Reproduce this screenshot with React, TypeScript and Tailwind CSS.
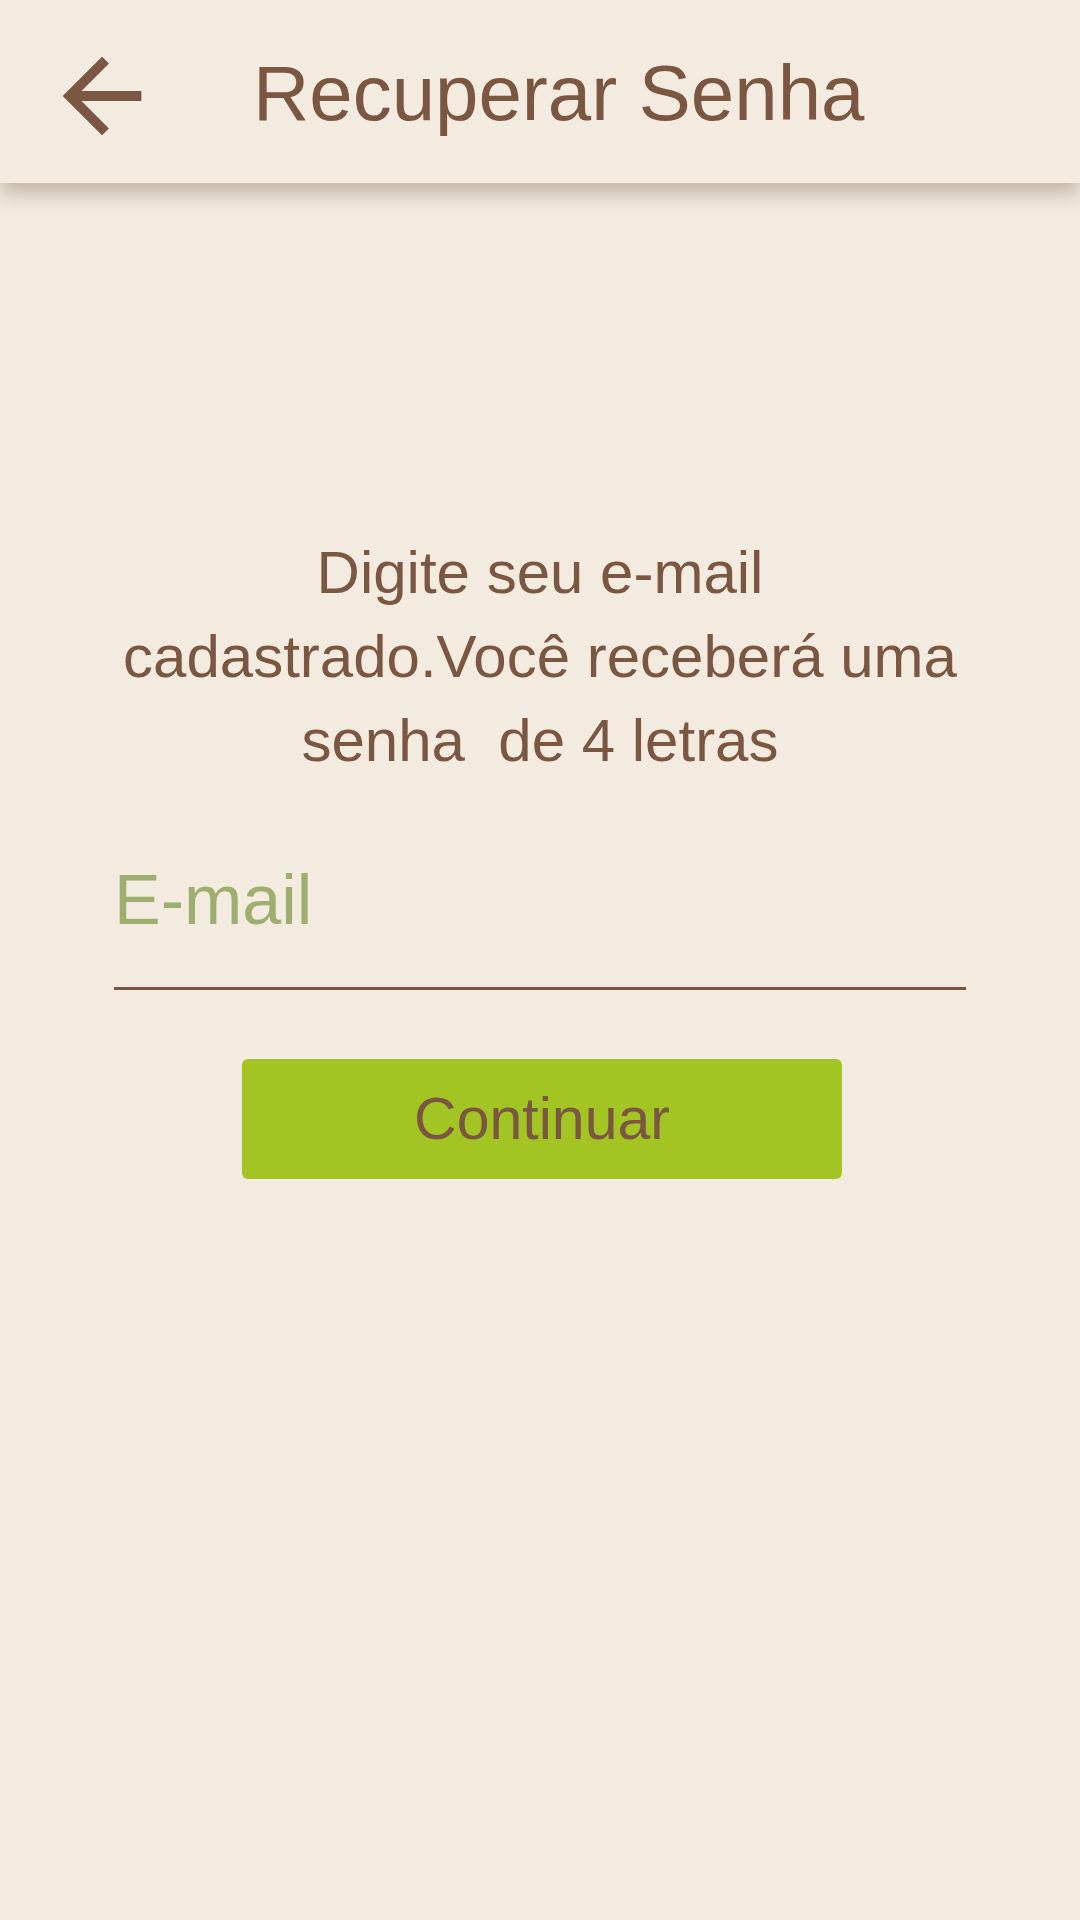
import React, { useState } from 'react';

export default function App() {
  const [email, setEmail] = useState('');

  return (
    <div className="min-h-[1920px] w-full bg-[#f3ebdf] text-[#7b5641]" style={{ fontFamily: '"Liberation Sans", Arial, sans-serif' }}>
      {/* Top bar */}
      <header className="relative z-10 flex h-[183px] items-start bg-[#f3ebdf] shadow-[0_10px_20px_rgba(70,50,30,0.3)]">
        <button className="ml-[43px] mt-[37px] shrink-0" aria-label="Voltar">
          <svg width="118" height="118" viewBox="0 0 24 24" fill="#7b5641">
            <path d="M20 11H7.83l5.59-5.59L12 4l-8 8 8 8 1.41-1.41L7.83 13H20v-2z" />
          </svg>
        </button>
        <h1 className="ml-[92px] mt-[54px] text-[78px] font-normal leading-none">Recuperar Senha</h1>
      </header>

      {/* Form */}
      <main className="mx-[114px] pt-[348px]">
        <p className="whitespace-pre-wrap text-center text-[60px] leading-[84px]">
          {'Digite seu e-mail cadastrado.Você receberá uma senha  de 4 letras'}
        </p>

        <input
          type="email"
          value={email}
          onChange={(e) => setEmail(e.target.value)}
          placeholder="E-mail"
          className="mt-[78px] block h-[129px] w-full border-b-[3px] border-[#7b5641] bg-transparent p-0 pb-[48px] text-[70px] text-[#7b5641] outline-none placeholder:text-[#9eae6e]"
        />

        <button className="mx-auto mt-[69px] block h-[120px] w-[600px] translate-x-[2px] rounded-[6px] bg-[#a2c523] text-[59px] leading-none text-[#7b5641]">
          Continuar
        </button>
      </main>
    </div>
  );
}
